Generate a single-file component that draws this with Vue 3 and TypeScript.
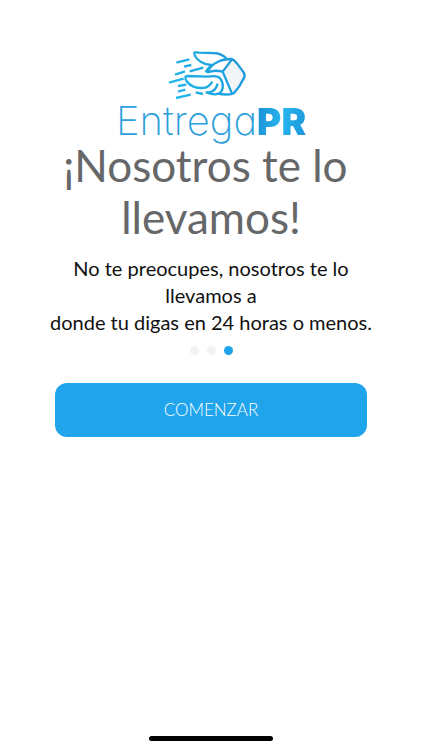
<script setup lang="ts">
import { ref } from 'vue'

const steps: number[] = [1, 2, 3]
const current = ref<number>(3)
</script>

<template>
  <div class="screen">
    <main class="content">
      <header class="brand">
        <svg class="mark" viewBox="0 0 270 180" aria-hidden="true">
          <defs>
            <linearGradient id="mark-ink" gradientUnits="userSpaceOnUse" x1="30" y1="150" x2="250" y2="40">
              <stop offset="0" stop-color="#27b9ec" />
              <stop offset="0.5" stop-color="#1ea9e2" />
              <stop offset="1" stop-color="#1d95d8" />
            </linearGradient>
          </defs>
          <path class="shade" d="M189 80 L216 42 L254 92 Q252 118 218 147 L212 142 Z" />
          <g class="ink">
            <path d="M49 53 L88 43 M72 65 L94 60 M89 79 L130 68 M45 89 L75 79 M27 113 L71 101 M54 123 L79 119 M54 140 L76 134 M48 159 L92 149 M107 142 L129 147" />
            <path d="M137 82 C141 72 149 65 157 60 C133 61 109 46 103 27 C101 20 108 22 116 23 L158 24 C175 24 189 30 199 40" />
            <path d="M142 84 C148 66 159 57 173 51 C186 44 201 42 214 42 C221 43 225 48 229 53 L251 82 C256 90 254 96 250 102 C242 120 231 135 221 145 C214 150 188 149 172 146" />
            <path d="M142 82 C158 76 173 76 188 80 L216 43 M188 80 L216 146" />
            <path d="M136 128 C112 132 89 124 79 107 C75 99 74 93 83 93 L142 95 C160 92 175 92 181 101 C192 116 191 138 176 146 C165 150 151 147 141 143" />
            <path d="M134 128 C145 128 152 118 157 110 M137 142 C158 145 169 131 173 116" />
          </g>
        </svg>
        <div class="wordmark"><span class="thin">Entrega</span><span class="heavy">PR</span></div>
      </header>
      <h1 class="title">¡Nosotros te lo&nbsp;<br />llevamos!</h1>
      <p class="lead">No te preocupes, nosotros te lo llevamos a<br />donde tu digas en 24 horas o menos.</p>
      <div class="dots">
        <span v-for="step in steps" :key="step" class="dot" :class="{ active: step === current }"></span>
      </div>
      <button class="start" type="button">COMENZAR</button>
    </main>
    <div class="home-bar"></div>
  </div>
</template>

<style>
body {
  background: #fff;
}
</style>

<style scoped>
.screen {
  box-sizing: border-box;
  min-height: 100vh;
  display: flex;
  flex-direction: column;
  align-items: center;
  justify-content: space-between;
  padding: 45px 0 9px;
  font-family: Lato, "Open Sans", sans-serif;
  background: #fff;
}

.content {
  width: 100%;
  display: flex;
  flex-direction: column;
  align-items: center;
  text-align: center;
}

.brand {
  display: flex;
  flex-direction: column;
  align-items: center;
}

.mark {
  display: block;
  width: 90px;
  height: 60px;
  margin-right: 12px;
}

.ink {
  fill: none;
  stroke: url(#mark-ink);
  stroke-width: 7;
  stroke-linecap: butt;
  stroke-linejoin: round;
}

.shade {
  fill: #f2f4f8;
}

.wordmark {
  display: flex;
  align-items: baseline;
  height: 34px;
  line-height: 32px;
  font-family: Inter, sans-serif;
}

.thin {
  font-size: 40px;
  font-weight: 200;
  font-feature-settings: "cv11";
  color: #2ba0dc;
}

.heavy {
  font-weight: 900;
  font-size: 37px;
  color: transparent;
  background: linear-gradient(100deg, #1b8ed3, #27b6ee 50%, #1d94d8);
  background-clip: text;
}

.title {
  max-width: 320px;
  margin: 0;
  font-size: 44px;
  line-height: 52px;
  font-weight: 400;
  color: #666769;
}

.lead {
  max-width: 340px;
  margin: 12px 0 0;
  font-size: 20px;
  line-height: 27px;
  color: #111;
}

.dots {
  display: flex;
  gap: 8px;
  margin-top: 10px;
}

.dot {
  width: 9px;
  height: 9px;
  border-radius: 50%;
  background: #f2f2f2;
}

.dot.active {
  background: #20a4ec;
}

.start {
  width: 74%;
  height: 54px;
  margin-top: 28px;
  padding: 0;
  border: 0;
  border-radius: 12px;
  background: #20a4ec;
  color: #fff;
  font: 300 17px/52px Lato, sans-serif;
}

.home-bar {
  width: 124px;
  height: 5px;
  border-radius: 3px;
  background: #000;
}
</style>
